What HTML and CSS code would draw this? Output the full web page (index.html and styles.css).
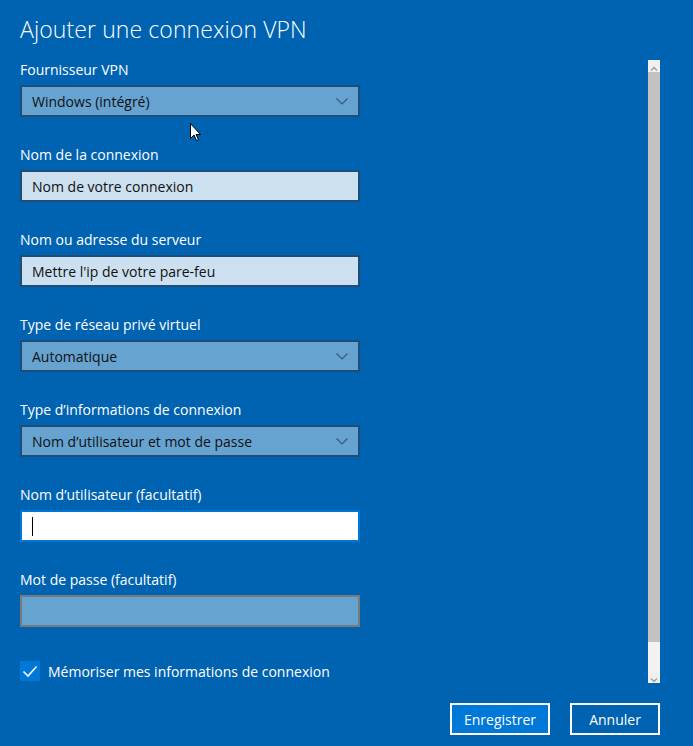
FILE: index.html
```html
<!DOCTYPE html>
<html lang="fr">
<head>
    <meta charset="UTF-8">
    <meta name="viewport" content="width=device-width, initial-scale=1.0">
    <title>Ajouter une connexion VPN</title>
    <link rel="stylesheet" href="styles.css">
</head>
<body>
    <div class="dialog">
        <h1>Ajouter une connexion VPN</h1>

        <div class="pane">
            <div class="form">
                <div class="field">
                    <label>Fournisseur VPN</label>
                    <div class="select">
                        <span>Windows (intégré)</span>
                        <svg class="chevron" width="12" height="7" viewBox="0 0 12 7"><path d="M0.5 0.5 L6 6 L11.5 0.5" /></svg>
                    </div>
                </div>

                <div class="field">
                    <label>Nom de la connexion</label>
                    <div class="textbox">Nom de votre connexion</div>
                </div>

                <div class="field">
                    <label>Nom ou adresse du serveur</label>
                    <div class="textbox">Mettre l'ip de votre pare-feu</div>
                </div>

                <div class="field">
                    <label>Type de réseau privé virtuel</label>
                    <div class="select">
                        <span>Automatique</span>
                        <svg class="chevron" width="12" height="7" viewBox="0 0 12 7"><path d="M0.5 0.5 L6 6 L11.5 0.5" /></svg>
                    </div>
                </div>

                <div class="field">
                    <label>Type d’informations de connexion</label>
                    <div class="select">
                        <span>Nom d’utilisateur et mot de passe</span>
                        <svg class="chevron" width="12" height="7" viewBox="0 0 12 7"><path d="M0.5 0.5 L6 6 L11.5 0.5" /></svg>
                    </div>
                </div>

                <div class="field">
                    <label>Nom d’utilisateur (facultatif)</label>
                    <div class="textbox focused"><span class="caret"></span></div>
                </div>

                <div class="field">
                    <label>Mot de passe (facultatif)</label>
                    <div class="textbox password"></div>
                </div>

                <div class="remember">
                    <span class="checkbox">
                        <svg width="20" height="20" viewBox="0 0 20 20"><path d="M3.5 10.5 L8 15 L16.5 5.5" /></svg>
                    </span>
                    <span>Mémoriser mes informations de connexion</span>
                </div>
            </div>

            <div class="scrollbar">
                <div class="arrow">
                    <svg width="12" height="12" viewBox="0 0 12 12"><path d="M3 7.5 L6 4.5 L9 7.5" /></svg>
                </div>
                <div class="thumb"></div>
                <div class="track"></div>
                <div class="arrow">
                    <svg width="12" height="12" viewBox="0 0 12 12"><path d="M3 4.5 L6 7.5 L9 4.5" /></svg>
                </div>
            </div>
        </div>

        <div class="footer">
            <button class="primary">Enregistrer</button>
            <button>Annuler</button>
        </div>

        <!-- mouse pointer sitting over the form -->
        <svg class="pointer" width="12" height="19" viewBox="0 0 12 19">
            <path d="M0.5 0.5 L0.5 15.5 L4 12 L6.5 17.5 L8.5 16.5 L6 11.5 L10.5 11.5 Z" fill="#fff" stroke="#000" stroke-width="1" />
        </svg>
    </div>
</body>
</html>
```

FILE: styles.css
```css
* {
    margin: 0;
    padding: 0;
    box-sizing: border-box;
}

body {
    background: #0063b1;
    color: #fff;
    font-family: 'Open Sans', 'Noto Sans', sans-serif;
    font-size: 14px;
    width: 693px;
    height: 746px;
    overflow: hidden;
}

.dialog {
    position: relative;
    padding: 12px 33px 0 20px;
}

h1 {
    font-size: 23px;
    font-weight: 300;
    line-height: 34px;
    margin-bottom: 14px;
    letter-spacing: 0.1px;
}

.pane {
    display: grid;
    grid-template-columns: 1fr 12px;
    height: 623px;
}

.form {
    width: 340px;
}

.field {
    margin-bottom: 28px;
}

.field label {
    display: block;
    line-height: 20px;
    margin-bottom: 5px;
}

.select,
.textbox {
    height: 32px;
    border: 2px solid #1e4d78;
    color: #111;
    padding: 0 10px;
    display: flex;
    align-items: center;
    justify-content: space-between;
}

.select {
    background: #66a3d1;
}

.textbox {
    background: #cce0f0;
}

.textbox.focused {
    background: #fff;
    border-color: #0078d7;
}

.textbox.password {
    background: #66a3d1;
    border-color: #7a7a7a;
}

.caret {
    width: 1px;
    height: 19px;
    background: #000;
}

.chevron path {
    fill: none;
    stroke: #3a5877;
    stroke-width: 1.2;
}

.remember {
    display: flex;
    align-items: center;
    gap: 8px;
    margin-top: 34px;
}

.checkbox {
    width: 20px;
    height: 20px;
    background: #0078d7;
}

.checkbox path {
    fill: none;
    stroke: #fff;
    stroke-width: 1.6;
}

.scrollbar {
    display: flex;
    flex-direction: column;
    height: 623px;
}

.arrow {
    height: 12px;
    background: #f0f0f0;
}

.arrow path {
    fill: none;
    stroke: #a0a0a0;
    stroke-width: 1.5;
}

.thumb {
    flex: 0 0 570px;
    background: #c2c2c2;
}

.track {
    flex: 1;
    background: #f2f2f2;
}

.footer {
    display: flex;
    justify-content: flex-end;
    gap: 20px;
    margin-top: 20px;
}

.footer button {
    font-family: inherit;
    font-size: 14px;
    color: #fff;
    background: transparent;
    border: 2px solid #fff;
    height: 32px;
    width: 90px;
}

.footer button.primary {
    background: #0078d7;
    width: 100px;
}

.pointer {
    position: absolute;
    left: 190px;
    top: 123px;
}
```
